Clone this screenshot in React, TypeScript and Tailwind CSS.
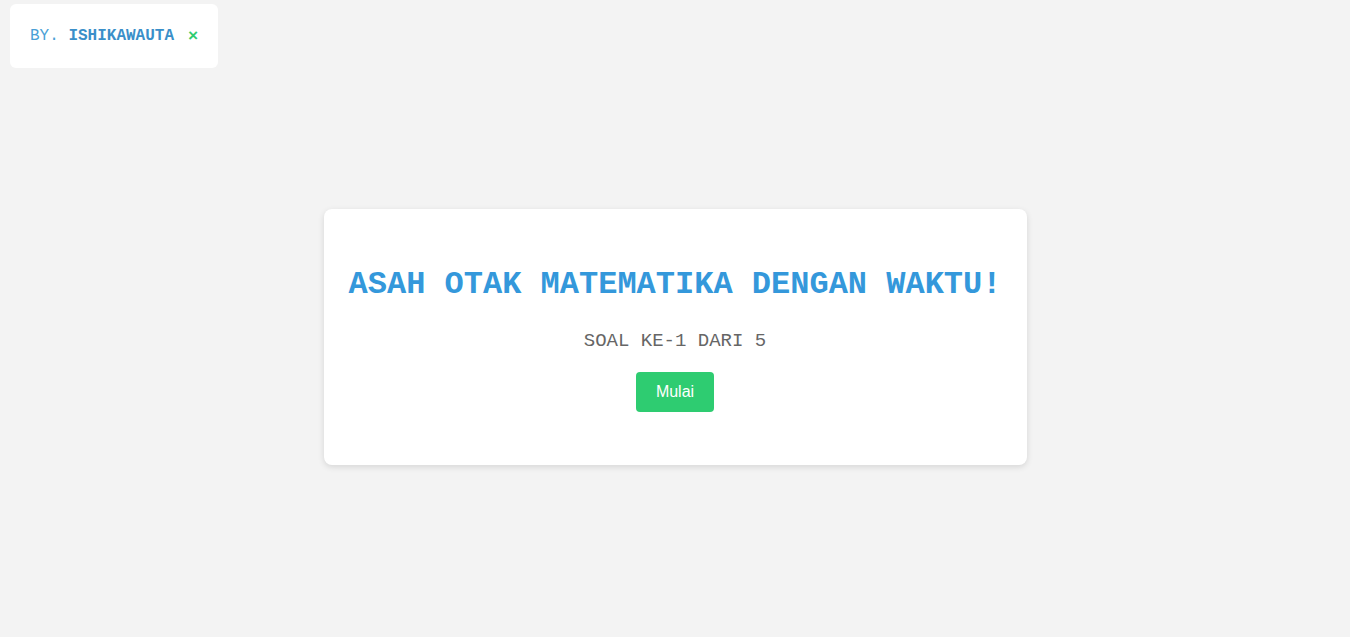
const mono = { fontFamily: '"Liberation Mono", "Courier New", monospace' };

const Credit = () => {
    return (
        <div className="absolute top-[4px] left-[10px] w-[208px] h-[64px] bg-white rounded-md flex items-center pl-[20px] text-[16px]" style={mono}>
            <span className="text-[#4a9fd6] whitespace-pre">BY. <b className="font-bold text-[#3a8fc9]">ISHIKAWAUTA</b></span>
            <button className="ml-[14px] font-bold text-[#2ecc71] text-[17px] leading-none">×</button>
        </div>
    )
}

export default function App() {
    return (
        <div className="relative min-h-screen bg-[#f3f3f3] flex justify-center pt-[209px]">
            <Credit />
            {/* Quiz card */}
            <div className="w-[703px] h-[256px] bg-white rounded-lg shadow-[0_2px_6px_rgba(0,0,0,0.12)] flex flex-col items-center pt-[58px]" style={mono}>
                <h1 className="text-[32px] leading-[36px] font-bold text-[#3498db]">ASAH OTAK MATEMATIKA DENGAN WAKTU!</h1>
                <p className="mt-[27px] text-[19px] leading-[22px] text-[#666]">SOAL KE-1 DARI 5</p>
                <button className="mt-[20px] h-[40px] px-[20px] bg-[#2ecc71] text-white rounded text-[16px]" style={{ fontFamily: '"Liberation Sans", Arial, sans-serif' }}>Mulai</button>
            </div>
        </div>
    );
}
